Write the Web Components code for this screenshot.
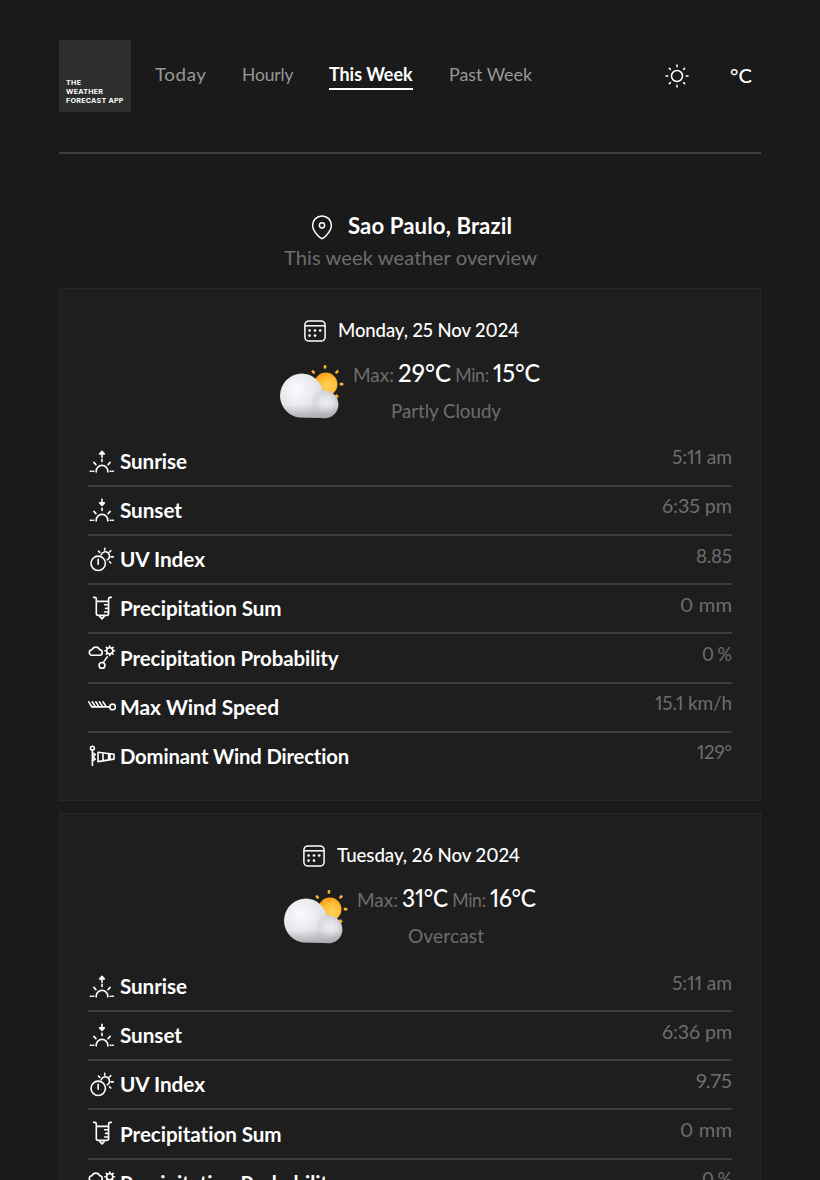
<!DOCTYPE html>
<html lang="en">
<head>
<meta charset="utf-8">
<title>The Weather Forecast App</title>
<style>
html,body{margin:0;height:100%;background:#1a1a1a}
body{overflow:hidden;font-family:Lato,"Open Sans",sans-serif;color:#fff}
</style>
</head>
<body>
<weather-app></weather-app>
<script>
class Base extends HTMLElement{
  render(html){ if(!this.shadowRoot) this.attachShadow({mode:'open'}); this.shadowRoot.innerHTML=html; }
}

/* A single line of text fitted to a given measure, partly by tracking and partly by glyph width. */
class TrackedText extends Base{
  connectedCallback(){
    this.render(`<style>:host{display:inline-block;white-space:nowrap}span{display:inline-block;white-space:nowrap;transform-origin:0 50%;font-variant-numeric:proportional-nums}</style><span><slot></slot></span>`);
    queueMicrotask(()=>{
      const want=+this.getAttribute('w'), n=this.textContent.length, s=this.shadowRoot.querySelector('span');
      const have=s.getBoundingClientRect().width;
      if(want&&n>1){
        const share=want<have?.25:.5, mid=have+(want-have)*share;
        s.style.letterSpacing=((mid-have)/(n-1))+'px';
        s.style.width=mid+'px';
        s.style.transform=`scaleX(${want/mid})`;
        s.style.marginRight=(want-mid)+'px';
      }
    });
  }
}
customElements.define('tracked-text',TrackedText);

const sunLow=`<path d="M8.200 24v-.8a5.800 5.800 0 0 1 11.600 0v.8M5.900 14.400l2 2.200M22.100 14.400l-2 2.200M2.300 23.200h1.100M4.900 23.200h.9M22.200 23.200h.9M24.600 23.200h.8M14 11.400v2"/>`;
const ICONS={
  sunrise:`<path d="M14 9.200V4"/><path fill="#fff" d="M11.600 6 14 3.400 16.400 6z"/>${sunLow}`,
  sunset:`<path d="M14 2.400v5"/><path fill="#fff" d="M11.600 5.800 14 8.400l2.400-2.600z"/>${sunLow}`,
  uv:`<circle cx="10.2" cy="17.3" r="7.2"/><path d="M10.2 13.200v5M13.200 8.700a4.300 4.300 0 1 1 6 5.200M16.700 2.200v1.900M23.200 10.900h2M21.500 6l1.300-1.300M10.500 5.100l1.300 1.300M21.500 15.700l1.300 1.300"/>`,
  rain:`<path d="M5.600 2.400h1.200q1.500 0 1.500 1.600v14.600q0 1.800 1.800 1.800h8.700q1.800 0 1.800-1.800V4q0-1.600 1.500-1.600h1.200M8.300 6.400h12.400M16.600 9.800h4M17.600 13.400h3M16.600 17h4M11.800 20.500v1l2.200 2.400 2.200-2.400v-1"/>`,
  prob:`<path d="M3.400 11.200h7.800a2.800 2.800 0 0 0 .5-5.600A4.200 4.200 0 0 0 4 5.700a2.800 2.800 0 0 0-.6 5.500z"/><circle cx="21.7" cy="6.8" r="3.1"/><path d="M21.700 3.500V2M21.700 10.100v1.500M18.400 6.800h-1.500M25 6.800h1.500M19.300 4.400l-1-1M24.100 4.400l1-1M19.300 9.200l-1 1M24.100 9.200l1 1M15.300 18.400l4-5.500"/><circle cx="14" cy="21.4" r="2.9"/>`,
  wind:`<path d="M3.600 12.900h18M.6 7.800l3.300 5.100M4.200 7.800l3.300 5.100M7.800 7.800l3.300 5.100M11.400 7.800l3.300 5.100M15 7.800l3.300 5.100"/><circle cx="24.6" cy="12.9" r="2.8"/>`,
  sock:`<circle cx="4.4" cy="5.2" r="1.9"/><path d="M4.400 7.200v15.200M4.500 9.600l2.700 1.800-2 2.400 2 2.400-2.700 1.800M10 9.300l16 1.900v4.900l-16 2.500zM15 10v8M20.600 10.700v6.300M22 10.900v5.900"/>`
};
class MetricIcon extends Base{
  connectedCallback(){
    this.render(`<style>:host{display:block;width:28px;height:28px}svg{display:block}</style>
    <svg width="28" height="28" viewBox="0 0 28 28" fill="none" stroke="#fff" stroke-width="1.6" stroke-linecap="round" stroke-linejoin="round">${ICONS[this.getAttribute('name')]}</svg>`);
  }
}
customElements.define('metric-icon',MetricIcon);

class MetricRow extends Base{
  connectedCallback(){
    const a=n=>this.getAttribute(n);
    this.render(`<style>
      :host{display:flex;box-sizing:border-box;height:49.2px;border-bottom:2px solid #3d3d3d;align-items:flex-start}
      :host(:last-of-type){height:39.6px;border:0}
      metric-icon{margin:10px 4px 0 0}
      .l{font:700 21px/28px Lato,sans-serif;color:#fff;margin-top:9.2px;flex:1}
      .v{font:400 20px/28px Lato,sans-serif;color:#6d6d6d;margin-top:4.7px}
    </style><metric-icon name="${a('icon')}"></metric-icon>
    <div class="l"><tracked-text w="${a('lw')}">${a('label')}</tracked-text></div>
    <div class="v"><tracked-text w="${a('vw')}">${a('value')}</tracked-text></div>`);
  }
}
customElements.define('metric-row',MetricRow);

class CloudArt extends Base{
  connectedCallback(){
    this.render(`<style>:host{display:block;width:64px;height:60px}svg{display:block;overflow:visible}</style>
    <svg width="64" height="60" viewBox="0 0 64 60">
      <defs>
        <radialGradient id="s" cx=".6" cy=".6" r=".65"><stop offset="0" stop-color="#ffd35e"/><stop offset=".55" stop-color="#ffbd32"/><stop offset="1" stop-color="#f79a1b"/></radialGradient>
        <radialGradient id="c" gradientUnits="userSpaceOnUse" cx="17" cy="28" r="40"><stop offset="0" stop-color="#fafbfd"/><stop offset=".45" stop-color="#e6e8eb"/><stop offset=".75" stop-color="#cfd1d4"/><stop offset="1" stop-color="#c4c6c9"/></radialGradient>
        <radialGradient id="d" gradientUnits="userSpaceOnUse" cx="46" cy="42" r="15"><stop offset="0" stop-color="#eceef1"/><stop offset=".5" stop-color="#dfe1e4"/><stop offset="1" stop-color="#c8cacd" stop-opacity="0"/></radialGradient>
        <linearGradient id="e" gradientUnits="userSpaceOnUse" x1="0" y1="44" x2="0" y2="57.500"><stop offset="0" stop-color="#8e9093" stop-opacity="0"/><stop offset="1" stop-color="#8e9093" stop-opacity=".55"/></linearGradient>
        <path id="o" d="M22 12.600a22 22 0 0 1 20.800 16.900A13.900 13.900 0 1 1 46 57.200Q34 56.600 22 56.600a22 22 0 0 1 0-44z"/>
      </defs>
      <g stroke="#fdb42c" stroke-width="2.7" stroke-linecap="round"><path d="M45 5.300v1.200M57.400 10.400l-.9 1M62.200 23.200h-1.300M56.400 34.800l.8.8M32.800 10.400l.9 1"/></g>
      <circle cx="45.800" cy="23.200" r="11.600" fill="url(#s)"/>
      <use href="#o" fill="url(#c)"/><use href="#o" fill="url(#d)"/><use href="#o" fill="url(#e)"/>
    </svg>`);
  }
}
customElements.define('cloud-art',CloudArt);

class DayCard extends Base{
  connectedCallback(){
    const d=this.data, t=(x)=>`<tracked-text w="${x[1]}">${x[0]}</tracked-text>`;
    const r=(i,l,lw,k)=>`<metric-row icon="${i}" label="${l}" lw="${lw}" value="${d[k][0]}" vw="${d[k][1]}"></metric-row>`;
    this.render(`<style>
      :host{display:block;border:1px solid #282828;background:#1e1e1e;padding:28px 28px 28px;margin-bottom:12px}
      .date{display:flex;justify-content:center;align-items:center;gap:12px;height:28px;padding-left:2.6px;font:500 19px/26px Lato,sans-serif}
      .date tracked-text{padding-bottom:2px}
      .now{display:flex;justify-content:center;gap:9px;margin-top:8px;height:84.6px;padding-right:1px}
      cloud-art{margin-top:8px}
      .txt{text-align:center;color:#6d6d6d;font:400 19px/38px Lato,sans-serif;padding-top:.6px}
      .t{display:flex;align-items:baseline;gap:4px}
      .t b{font:500 24px/38px Lato,sans-serif;color:#fff}
      .c{line-height:33px}
    </style>
    <div class="date"><svg width="22" height="22" viewBox="0 0 22 22" fill="none" stroke="#fff" stroke-width="1.5"><rect x=".9" y=".9" width="20.2" height="20.2" rx="4.2"/><path d="M1 5.800h20"/><g fill="#fff" stroke="none"><circle cx="5.600" cy="10.500" r="1.350"/><circle cx="11" cy="10.500" r="1.350"/><circle cx="16.200" cy="10.500" r="1.350"/><circle cx="5.600" cy="15.600" r="1.350"/><circle cx="11" cy="15.600" r="1.350"/></g></svg>${t(d.date)}</div>
    <div class="now"><cloud-art></cloud-art><div class="txt"><div class="t">${t(['Max:',41])}<b>${t(d.max)}</b>${t(['Min:',34])}<b>${t(d.min)}</b></div><div class="c">${t(d.cond)}</div></div></div>
    ${r('sunrise','Sunrise',67,'rise')}${r('sunset','Sunset',62,'set')}${r('uv','UV Index',85,'uv')}${r('rain','Precipitation Sum',162,'sum')}${r('prob','Precipitation Probability',219,'prob')}${r('wind','Max Wind Speed',159,'wind')}${r('sock','Dominant Wind Direction',229.500,'dir')}`);
  }
}
customElements.define('day-card',DayCard);

class AppHeader extends Base{
  connectedCallback(){
    this.render(`<style>
      :host{display:flex;align-items:center;height:72px;padding:40px 0;border-bottom:2px solid #3d3d3d}
      .logo{box-sizing:border-box;width:72px;height:72px;background:#2e2e2e;padding:39.4px 0 0 7px;font:700 6.8px/8.8px Inter,sans-serif;color:#fff}
      .logo tracked-text{display:block}
      nav{display:flex;gap:36px;margin-left:24px;flex:1;font:400 18px/24px Lato,sans-serif;color:#979797}
      nav a{padding-bottom:2px;border-bottom:2px solid transparent;height:24px}
      nav a.on{color:#fff;font-weight:700;border-color:#fff}
      .unit{font:500 20px/26px Lato,sans-serif;margin:0 9px 2px 41px}
    </style>
    <div class="logo"><tracked-text w="15">THE</tracked-text><tracked-text w="37">WEATHER</tracked-text><tracked-text w="57.5">FORECAST APP</tracked-text></div>
    <nav><a><tracked-text w="51">Today</tracked-text></a><a><tracked-text w="51.5">Hourly</tracked-text></a><a class="on"><tracked-text w="83.5">This Week</tracked-text></a><a><tracked-text w="83">Past Week</tracked-text></a></nav>
    <svg width="24" height="24" viewBox="0 0 24 24" fill="none" stroke="#fff" stroke-width="1.5" stroke-linecap="round"><circle cx="12" cy="12" r="5.5"/><path d="M12 1v1.800M12 21.200V23M1 12h1.800M21.200 12H23M4.300 4.300l1.100 1.100M18.600 18.600l1.100 1.100M4.300 19.700l1.100-1.100M18.600 5.400l1.100-1.100"/></svg>
    <div class="unit"><tracked-text w="22">°C</tracked-text></div>`);
  }
}
customElements.define('app-header',AppHeader);

class PlaceTitle extends Base{
  connectedCallback(){
    this.render(`<style>
      :host{display:block;margin:56px 0 16px;text-align:center}
      .p{display:flex;justify-content:center;align-items:center;gap:14px;height:33px;padding-left:2px;font:700 22px/30px Lato,sans-serif}
      .p tracked-text{padding-bottom:1px}
      .s{font:400 20px/29px Lato,sans-serif;color:#6d6d6d}
    </style>
    <div class="p"><svg width="24" height="26" viewBox="0 0 24 26" fill="none" stroke="#fff" stroke-width="1.5" stroke-linejoin="round"><path d="M12 24.600c-1 0-2-.8-4-2.900C5 18.600 2.600 15.200 2.600 11.300a9.400 9.400 0 0 1 18.800 0c0 3.900-2.400 7.300-5.400 10.400-2 2.100-3 2.900-4 2.900z"/><circle cx="12" cy="11.300" r="2.600"/></svg><tracked-text w="164">Sao Paulo, Brazil</tracked-text></div>
    <div class="s"><tracked-text w="253">This week weather overview</tracked-text></div>`);
  }
}
customElements.define('place-title',PlaceTitle);

const DAYS=[
 {date:['Monday, 25 Nov 2024',181],max:['29°C',53],min:['15°C',47],cond:['Partly Cloudy',110],rise:['5:11 am',60],set:['6:35 pm',70],uv:['8.85',36],sum:['0 mm',52],prob:['0 %',30],wind:['15.1 km/h',77],dir:['129°',35]},
 {date:['Tuesday, 26 Nov 2024',183],max:['31°C',46],min:['16°C',46],cond:['Overcast',76],rise:['5:11 am',60],set:['6:36 pm',70],uv:['9.75',36],sum:['0 mm',52],prob:['0 %',30],wind:['15.1 km/h',77],dir:['129°',35]}
];
class WeatherApp extends Base{
  connectedCallback(){
    this.render(`<style>:host{display:block;width:702px;height:100vh;margin:0 auto;overflow:hidden}</style><app-header></app-header><place-title></place-title><main></main>`);
    const m=this.shadowRoot.querySelector('main');
    for(const d of DAYS){ const c=document.createElement('day-card'); c.data=d; m.append(c); }
  }
}
customElements.define('weather-app',WeatherApp);
</script>
</body>
</html>
